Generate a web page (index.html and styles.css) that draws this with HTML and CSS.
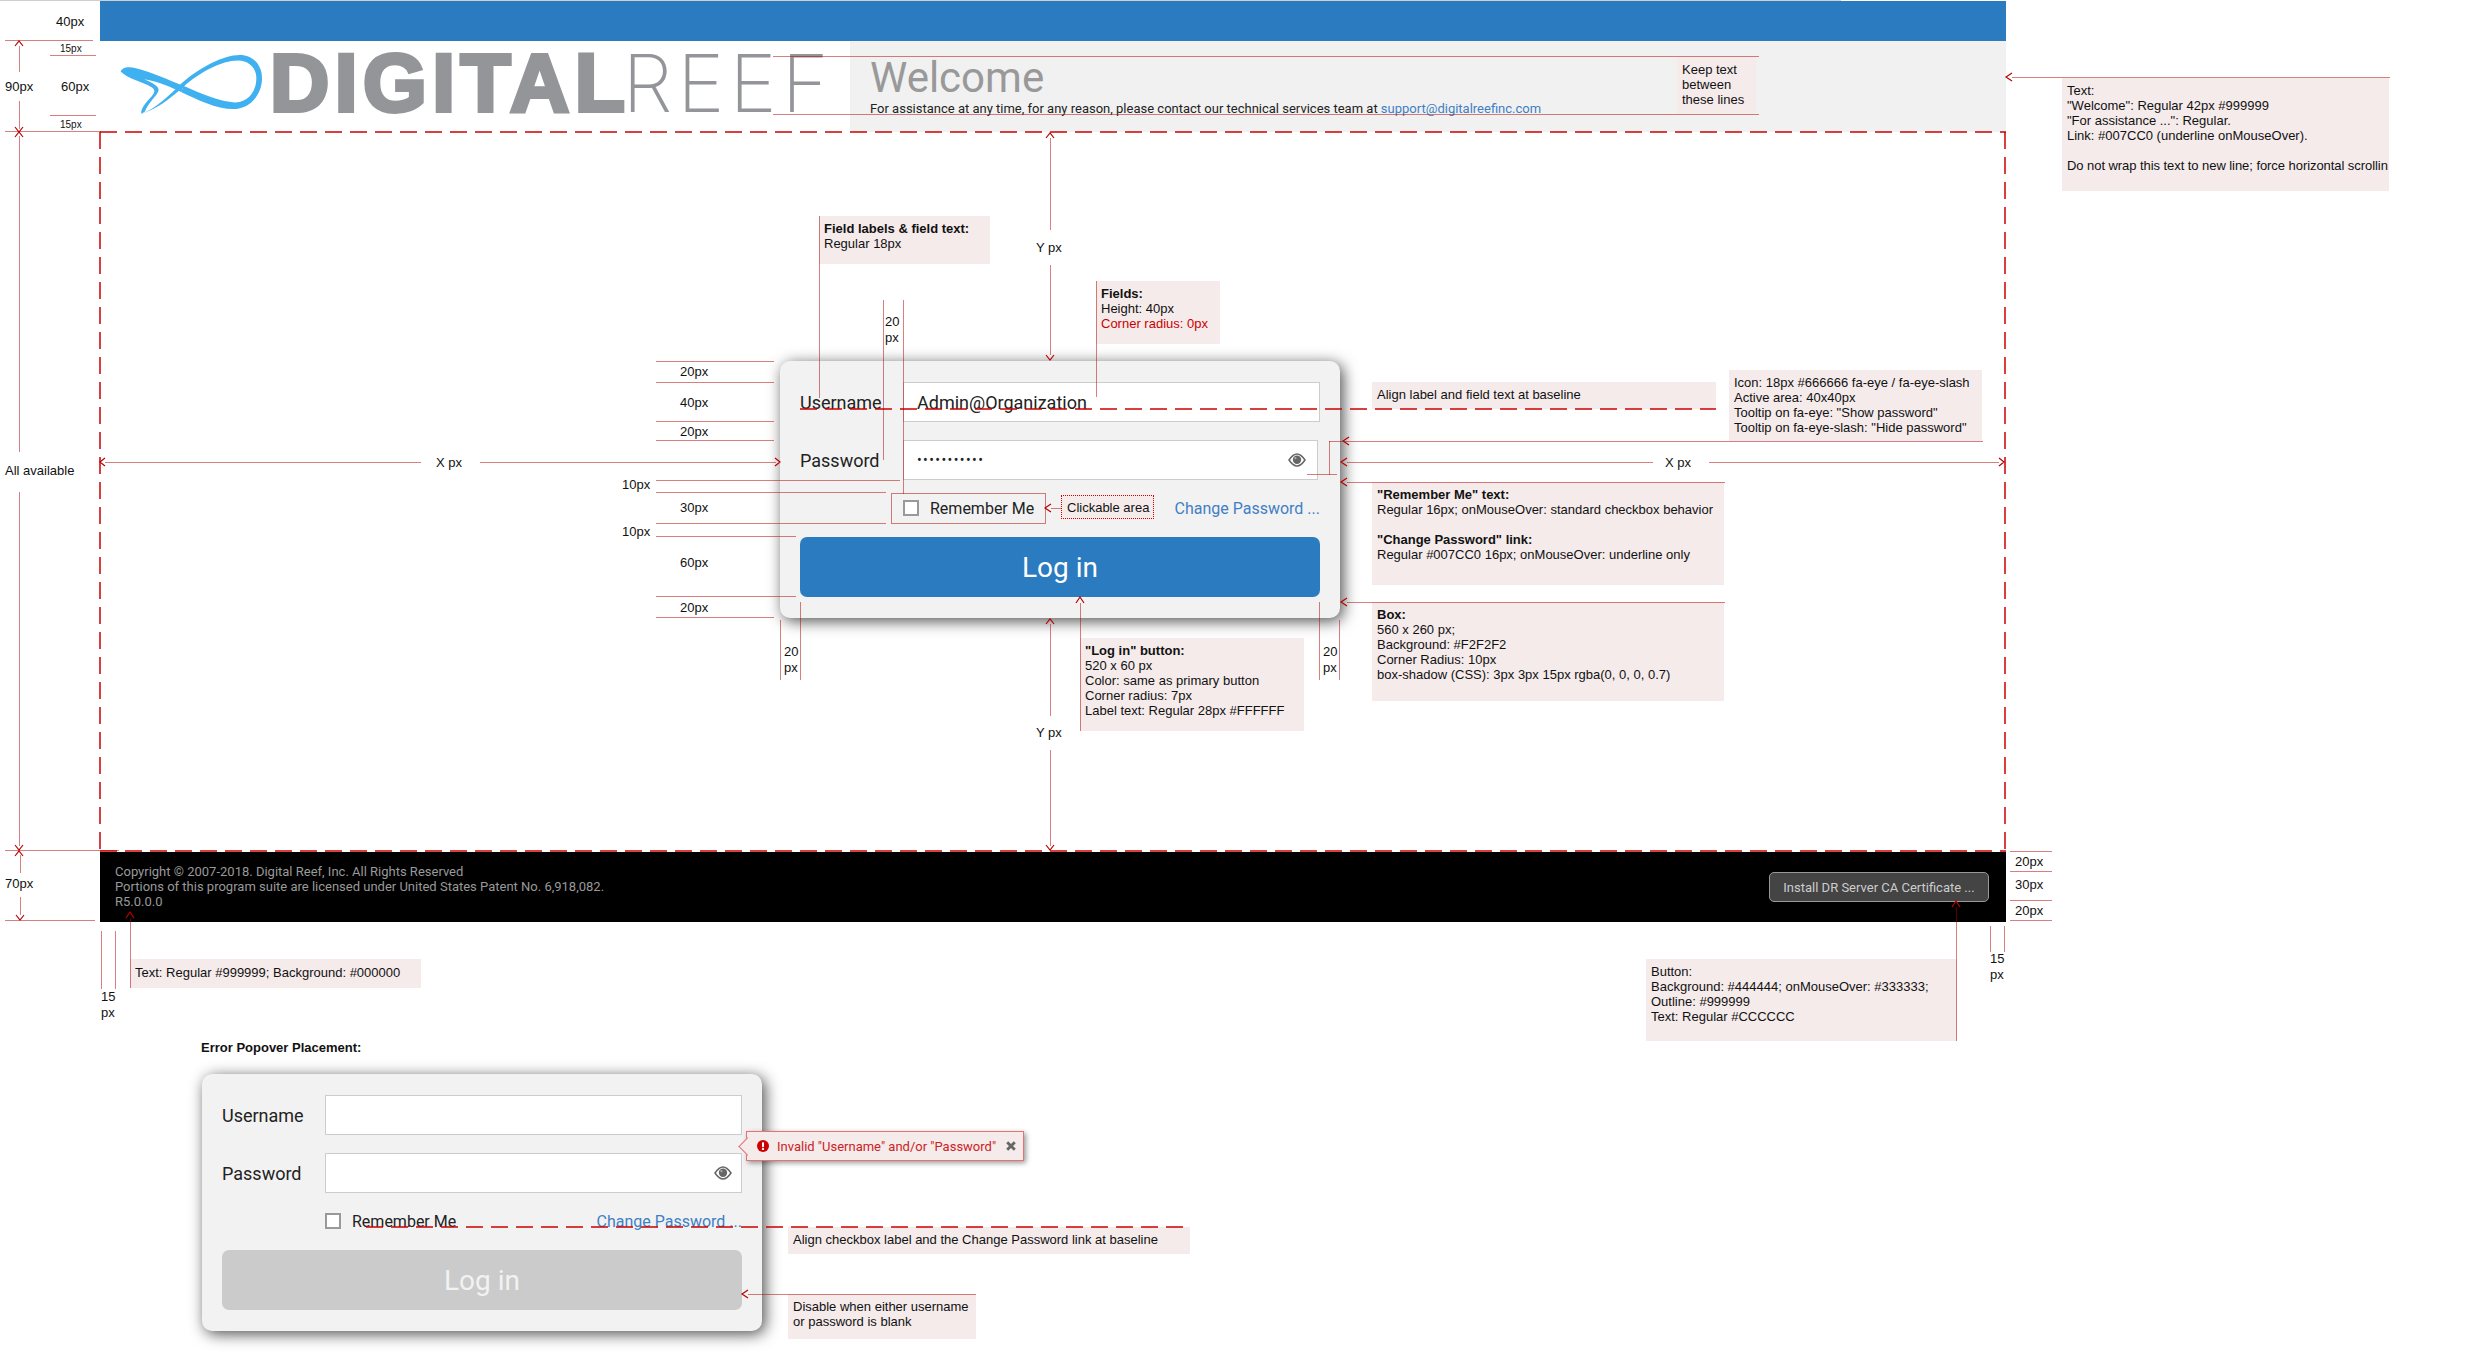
FILE: index.html
```html
<!DOCTYPE html>
<html lang="en">
<head>
  <meta charset="UTF-8" />
  <title>Digital Reef login spec</title>
  <link rel="stylesheet" href="styles.css">
</head>
<body>
  <div class="top-rule"></div>

  <div class="frame">
    <div class="topbar"></div>

    <header class="header">
      <div class="logo">
        <svg class="fish" viewBox="60 70 430 185">
          <path d="M125,252 C165,238 205,200 245,160 C300,113 370,75 420,75 C460,75 487,105 487,145 C487,195 450,238 400,238 C350,238 290,208 245,187 L250,168 C300,190 365,217 405,218 C445,219 470,185 470,145 C470,112 445,92 415,92 C365,92 300,128 252,170 C205,212 165,240 125,252 Z" />
          <path d="M62,125 C66,113 85,109 108,115 C160,128 205,150 250,168 L245,187 C215,172 175,155 133,148 C155,158 178,168 176,182 C172,198 145,218 135,245 L125,252 C120,245 130,225 150,205 C165,190 168,180 155,172 C125,155 80,145 62,125 Z" />
        </svg>
        <span class="word-digital">DIGITAL</span><span class="word-reef">REEF</span>
      </div>
      <div class="welcome">
        <h1>Welcome</h1>
        <p>For assistance at any time, for any reason, please contact our technical services team at <a href="#">support@digitalreefinc.com</a></p>
      </div>
    </header>

    <main class="main">
      <div class="box">
        <div class="row">
          <span class="row-label">Username</span>
          <div class="field">Admin@Organization</div>
        </div>
        <div class="row">
          <span class="row-label">Password</span>
          <div class="field field-pass">
            <span class="dots">•••••••••••</span>
            <svg class="eye" viewBox="0 0 18 14"><path d="M1,7 C4,2.6 6.5,1 9,1 C11.5,1 14,2.6 17,7 C14,11.4 11.5,13 9,13 C6.5,13 4,11.4 1,7 Z" /><circle cx="9" cy="6.8" r="4.2" /><circle class="glint" cx="7.4" cy="5.2" r="1.1" /></svg>
          </div>
        </div>
        <div class="options">
          <label class="remember"><span class="check"></span>Remember Me</label>
          <a href="#">Change Password ...</a>
        </div>
        <button class="login-btn">Log in</button>
      </div>
    </main>

    <footer class="footer">
      <div class="legal">
        Copyright © 2007-2018. Digital Reef, Inc. All Rights Reserved<br>
        Portions of this program suite are licensed under United States Patent No. 6,918,082.<br>
        R5.0.0.0
      </div>
      <button class="cert-btn">Install DR Server CA Certificate ...</button>
    </footer>

    <section class="error-demo">
      <h3>Error Popover Placement:</h3>
      <div class="box">
        <div class="row">
          <span class="row-label">Username</span>
          <div class="field"></div>
        </div>
        <div class="row">
          <span class="row-label">Password</span>
          <div class="field">
            <svg class="eye" viewBox="0 0 18 14"><path d="M1,7 C4,2.6 6.5,1 9,1 C11.5,1 14,2.6 17,7 C14,11.4 11.5,13 9,13 C6.5,13 4,11.4 1,7 Z" /><circle cx="9" cy="6.8" r="4.2" /><circle class="glint" cx="7.4" cy="5.2" r="1.1" /></svg>
          </div>
        </div>
        <div class="options">
          <label class="remember"><span class="check"></span>Remember Me</label>
          <a href="#">Change Password ...</a>
        </div>
        <button class="login-btn disabled">Log in</button>

        <div class="popover">
          <svg class="pop-icon" viewBox="0 0 12 12"><circle cx="6" cy="6" r="6" /><rect x="5" y="2.2" width="2" height="5" rx="0.6" /><rect x="5" y="8" width="2" height="2" rx="0.6" /></svg>
          <span>Invalid "Username" and/or "Password"</span>
          <svg class="pop-close" viewBox="0 0 10 10"><path d="M2.2,0.2 L5,3 L7.8,0.2 L9.8,2.2 L7,5 L9.8,7.8 L7.8,9.8 L5,7 L2.2,9.8 L0.2,7.8 L3,5 L0.2,2.2 Z" /></svg>
        </div>
      </div>
    </section>
  </div>

  <!-- spec notes -->
  <div class="note n-keep">Keep text<br>between<br>these lines</div>
  <div class="note n-welcome">Text:<br>"Welcome": Regular 42px #999999<br>"For assistance ...": Regular.<br>Link: #007CC0 (underline onMouseOver).<br><br><span class="tight">Do not wrap this text to new line; force horizontal scrollin</span></div>
  <div class="note n-labels"><b>Field labels &amp; field text:</b><br>Regular 18px</div>
  <div class="note n-fields"><b>Fields:</b><br>Height: 40px<br><span class="red">Corner radius: 0px</span></div>
  <div class="note n-align">Align label and field text at baseline</div>
  <div class="note n-icon">Icon: 18px #666666 fa-eye / fa-eye-slash<br>Active area: 40x40px<br>Tooltip on fa-eye: "Show password"<br>Tooltip on fa-eye-slash: "Hide password"</div>
  <div class="note n-remember"><b>"Remember Me" text:</b><br>Regular 16px; onMouseOver: standard checkbox behavior<br><br><b>"Change Password" link:</b><br>Regular #007CC0 16px; onMouseOver: underline only</div>
  <div class="note n-box"><b>Box:</b><br>560 x 260 px;<br>Background: #F2F2F2<br>Corner Radius: 10px<br>box-shadow (CSS): 3px 3px 15px rgba(0, 0, 0, 0.7)</div>
  <div class="note n-login"><b>"Log in" button:</b><br>520 x 60 px<br>Color: same as primary button<br>Corner radius: 7px<br>Label text: Regular 28px #FFFFFF</div>
  <div class="note n-clickable">Clickable area</div>
  <div class="note n-footer">Text: Regular #999999; Background: #000000</div>
  <div class="note n-cert">Button:<br>Background: #444444; onMouseOver: #333333;<br>Outline: #999999<br>Text: Regular #CCCCCC</div>
  <div class="note n-baseline">Align checkbox label and the Change Password link at baseline</div>
  <div class="note n-disable">Disable when either username<br>or password is blank</div>

  <svg class="redlines" viewBox="0 0 2479 1359">
    <g class="dashed">
      <path d="M100,132 H2006 M100,132 V851 M2005,132 V851 M100,851 H2006" />
      <path d="M800,409 H1716" />
      <path d="M366,1227 H1190" />
    </g>
    <g class="dotted">
      <path d="M5,40 H93 M50,55 H95 M50,115 H95 M5,131 H100 M19,46 V72 M19,101 V128 M19,136 V451 M19,492 V846 M5,850 H118 M20,855 V873 M20,897 V915 M5,920 H95" />
      <path d="M773,56 H1758 M773,114 H1758" />
      <path d="M2012,77 H2389" />
      <path d="M1050,138 V230 M1050,265 V355 M1050,624 V715 M1050,750 V845" />
      <path d="M105,462 H420 M480,462 H775 M1347,462 H1652 M1709,462 H1999" />
      <path d="M819,216 V397 M883,300 V460 M903,300 V493 M1096,281 V396" />
      <path d="M656,361 H773 M656,382 H773 M656,421 H773 M656,440 H773 M656,480 H900 M656,492 H885 M656,523 H885 M656,536 H795 M656,596 H795 M656,617 H773" />
      <path d="M891,493 H1045 V523 H891 Z M1051,508 H1061" />
      <path d="M780,620 V680 M800,602 V680 M1319,602 V680 M1339,620 V680" />
      <path d="M1080,603 V731" />
      <path d="M1329,441 H1982 M1329,441 V474 M1307,474 H1336" />
      <path d="M1347,482 H1724 M1347,602 H1724" />
      <path d="M101,931 V988 M115,931 V988 M130,918 V988" />
      <path d="M1990,926 V951 M2004,926 V951 M2010,851 H2051 M2010,871 H2051 M2010,900 H2051 M2010,920 H2051" />
      <path d="M1956,907 V1041" />
      <path d="M748,1294 H976" />
    </g>
    <g class="arrows">
      <path d="M15,46 L19,41 L23,46 M15,127 L19,132 L23,127 M15,137 L19,132 L23,137" />
      <path d="M15,845 L19,850 L23,845 M15,856 L19,851 L23,856 M16,915 L20,920 L24,915" />
      <path d="M2012,73 L2006,77 L2012,81" />
      <path d="M1046,138 L1050,133 L1054,138 M1046,355 L1050,360 L1054,355 M1046,624 L1050,619 L1054,624 M1046,845 L1050,850 L1054,845" />
      <path d="M105,458 L100,462 L105,466 M775,458 L780,462 L775,466 M1347,458 L1341,462 L1347,466 M1999,458 L2004,462 L1999,466" />
      <path d="M1349,437 L1343,441 L1349,445 M1347,478 L1341,482 L1347,486 M1347,598 L1341,602 L1347,606" />
      <path d="M1051,504 L1045,508 L1051,512" />
      <path d="M1076,603 L1080,597 L1084,603" />
      <path d="M126,918 L130,912 L134,918 M1952,907 L1956,901 L1960,907" />
      <path d="M748,1290 L742,1294 L748,1298" />
    </g>
    <g class="dim">
      <text x="56" y="26">40px</text>
      <text class="small" x="60" y="52">15px</text>
      <text x="61" y="91">60px</text>
      <text x="5" y="91">90px</text>
      <text class="small" x="60" y="128">15px</text>
      <text x="5" y="475">All available</text>
      <text x="5" y="888">70px</text>
      <text x="436" y="467">X px</text>
      <text x="1665" y="467">X px</text>
      <text x="1036" y="252">Y px</text>
      <text x="1036" y="737">Y px</text>
      <text x="885" y="326">20</text>
      <text x="885" y="342">px</text>
      <text x="680" y="376">20px</text>
      <text x="680" y="407">40px</text>
      <text x="680" y="436">20px</text>
      <text x="622" y="489">10px</text>
      <text x="680" y="512">30px</text>
      <text x="622" y="536">10px</text>
      <text x="680" y="567">60px</text>
      <text x="680" y="612">20px</text>
      <text x="784" y="656">20</text>
      <text x="784" y="672">px</text>
      <text x="1323" y="656">20</text>
      <text x="1323" y="672">px</text>
      <text x="101" y="1001">15</text>
      <text x="101" y="1017">px</text>
      <text x="2015" y="866">20px</text>
      <text x="2015" y="889">30px</text>
      <text x="2015" y="915">20px</text>
      <text x="1990" y="963">15</text>
      <text x="1990" y="979">px</text>
    </g>
  </svg>
</body>
</html>
```

FILE: styles.css
```css
* {
  box-sizing: border-box;
}

body {
  margin: 0;
  position: relative;
  width: 2479px;
  height: 1359px;
  overflow: hidden;
  background-color: #ffffff;
  font-family: Roboto, sans-serif;
  color: #222222;
}

a {
  color: #3f7fc4;
  text-decoration: none;
}

.top-rule {
  width: 1841px;
  height: 1px;
  background-color: #cfcfcf;
}

.frame {
  width: 1906px;
  margin-left: 100px;
}

.topbar {
  height: 40px;
  background-color: #2b7bc0;
}

/* header */
.header {
  display: flex;
  height: 91px;
}

.logo {
  display: flex;
  align-items: flex-start;
  width: 750px;
  padding: 12px 0 0 20px;
  line-height: 60px;
  color: #939598;
  white-space: nowrap;
}

.fish {
  width: 143px;
  height: 62px;
  margin-right: 7px;
  fill: #3fb1f0;
}

.word-digital {
  font-family: "Liberation Sans", sans-serif;
  font-weight: 700;
  font-size: 82px;
  letter-spacing: 5.5px;
  -webkit-text-stroke: 4px #939598;
}

.word-reef {
  font-family: Inter, sans-serif;
  font-weight: 200;
  font-size: 80px;
  letter-spacing: 5px;
  margin-left: -8px;
}

.welcome {
  flex: 1;
  padding: 16px 0 0 20px;
  background-color: #f1f1f1;
  white-space: nowrap;
}

.welcome h1 {
  margin: 0;
  font-size: 42px;
  font-weight: 400;
  line-height: 42px;
  color: #999999;
}

.welcome p {
  margin: 2px 0 0;
  font-size: 13px;
  line-height: 16px;
}

/* login box */
.main {
  height: 720px;
  padding: 229px 0 0 680px;
}

.box {
  position: relative;
  width: 560px;
  height: 257px;
  padding: 21px 20px;
  background-color: #f2f2f2;
  border-radius: 10px;
  box-shadow: 3px 3px 15px rgba(0, 0, 0, 0.7);
}

.row {
  display: flex;
  align-items: center;
  height: 40px;
  margin-bottom: 18px;
}

.row-label {
  width: 103px;
  font-size: 18px;
}

.field {
  display: flex;
  align-items: center;
  justify-content: space-between;
  flex: 1;
  height: 40px;
  padding: 0 13px;
  background-color: #ffffff;
  border: 1px solid #cccccc;
  font-size: 18px;
}

.field-pass {
  margin-right: 2px;
}

.dots {
  font-size: 14px;
  letter-spacing: 1.4px;
}

.eye {
  width: 18px;
  height: 14px;
  margin-left: auto;
  margin-right: -2px;
  fill: #666666;
}

.error-demo .eye {
  margin-right: -4px;
}

.eye path {
  fill: #ffffff;
  stroke: #666666;
  stroke-width: 1.5;
}

.eye .glint {
  fill: #aaaaaa;
}

.options {
  display: flex;
  align-items: center;
  justify-content: space-between;
  height: 30px;
  margin: -5px 0 14px 103px;
  font-size: 16px;
}

.remember {
  display: flex;
  align-items: center;
}

.check {
  width: 16px;
  height: 16px;
  margin-right: 11px;
  background-color: #ffffff;
  border: 2px solid #999999;
}

.login-btn {
  display: block;
  width: 100%;
  height: 60px;
  padding: 0;
  border: none;
  border-radius: 7px;
  background-color: #2b7bc0;
  color: #ffffff;
  font-family: Roboto, sans-serif;
  font-size: 28px;
}

.login-btn.disabled {
  background-color: #cbcbcb;
  color: #f2f2f2;
}

/* footer */
.footer {
  display: flex;
  justify-content: space-between;
  height: 70px;
  padding: 12px 17px 0 15px;
  background-color: #000000;
  color: #999999;
  font-size: 13px;
  line-height: 15px;
}

.cert-btn {
  width: 220px;
  height: 30px;
  margin-top: 8px;
  padding: 0;
  background-color: #444444;
  border: 1px solid #999999;
  border-radius: 5px;
  color: #cccccc;
  font-family: Roboto, sans-serif;
  font-size: 13px;
}

/* error example */
.error-demo {
  padding: 118px 0 0 102px;
}

.error-demo h3 {
  margin: 0 0 19px -1px;
  font-family: "Liberation Sans", sans-serif;
  font-size: 13px;
  line-height: 15px;
  font-weight: 700;
  color: #111111;
}

.popover {
  position: absolute;
  left: 544px;
  top: 57px;
  display: flex;
  align-items: center;
  width: 278px;
  height: 30px;
  padding-left: 10px;
  background-color: #f5ebeb;
  border: 1px solid #e57373;
  box-shadow: 2px 2px 5px rgba(0, 0, 0, 0.4);
  color: #cc2222;
  font-size: 13px;
  white-space: nowrap;
}

.popover::before {
  content: "";
  position: absolute;
  left: -6px;
  top: 8px;
  width: 12px;
  height: 12px;
  background-color: #f5ebeb;
  border-left: 1px solid #e57373;
  border-bottom: 1px solid #e57373;
  transform: rotate(45deg);
}

.pop-icon {
  position: relative;
  width: 12px;
  height: 12px;
  margin-right: 8px;
  fill: #cc0000;
}

.pop-icon rect {
  fill: #ffffff;
}

.pop-close {
  width: 10px;
  height: 10px;
  margin-left: 10px;
  fill: #666666;
}

/* spec notes */
.note {
  position: absolute;
  padding: 5px;
  overflow: hidden;
  background-color: #f5ebeb;
  font-family: "Liberation Sans", sans-serif;
  font-size: 13px;
  line-height: 15px;
  color: #111111;
  white-space: nowrap;
}

.red {
  color: #cc0000;
}

.tight {
  letter-spacing: -0.06px;
}

.n-keep { left: 1677px; top: 57px; width: 79px; height: 57px; }
.n-welcome { left: 2062px; top: 78px; width: 327px; height: 113px; padding-right: 0; }
.n-labels { left: 819px; top: 216px; width: 171px; height: 48px; }
.n-fields { left: 1096px; top: 281px; width: 124px; height: 63px; }
.n-align { left: 1372px; top: 382px; width: 344px; height: 27px; }
.n-icon { left: 1729px; top: 370px; width: 253px; height: 71px; }
.n-remember { left: 1372px; top: 482px; width: 352px; height: 103px; }
.n-box { left: 1372px; top: 602px; width: 352px; height: 99px; }
.n-login { left: 1080px; top: 638px; width: 224px; height: 93px; }
.n-clickable { left: 1061px; top: 495px; width: 93px; height: 24px; padding: 4px 5px; border: 1px dotted #cc0000; }
.n-footer { left: 130px; top: 959px; width: 291px; height: 29px; padding-top: 6px; }
.n-cert { left: 1646px; top: 959px; width: 311px; height: 82px; }
.n-baseline { left: 788px; top: 1227px; width: 402px; height: 27px; }
.n-disable { left: 788px; top: 1294px; width: 188px; height: 45px; }

/* red measuring lines, on top of everything */
.redlines {
  position: absolute;
  left: 0;
  top: 0;
  width: 2479px;
  height: 1359px;
  pointer-events: none;
  fill: none;
}

.dashed {
  stroke: #cc0000;
  stroke-width: 1.5;
  stroke-dasharray: 17 8;
}

.dotted {
  stroke: #b00000;
  stroke-width: 1;
  stroke-dasharray: 1 1;
  transform: translate(0.5px, 0.5px);
}

.arrows {
  stroke: #b80000;
  stroke-width: 1.2;
}

.dim {
  fill: #111111;
  font-family: "Liberation Sans", sans-serif;
  font-size: 13px;
}

.dim .small {
  font-size: 10px;
}
```
